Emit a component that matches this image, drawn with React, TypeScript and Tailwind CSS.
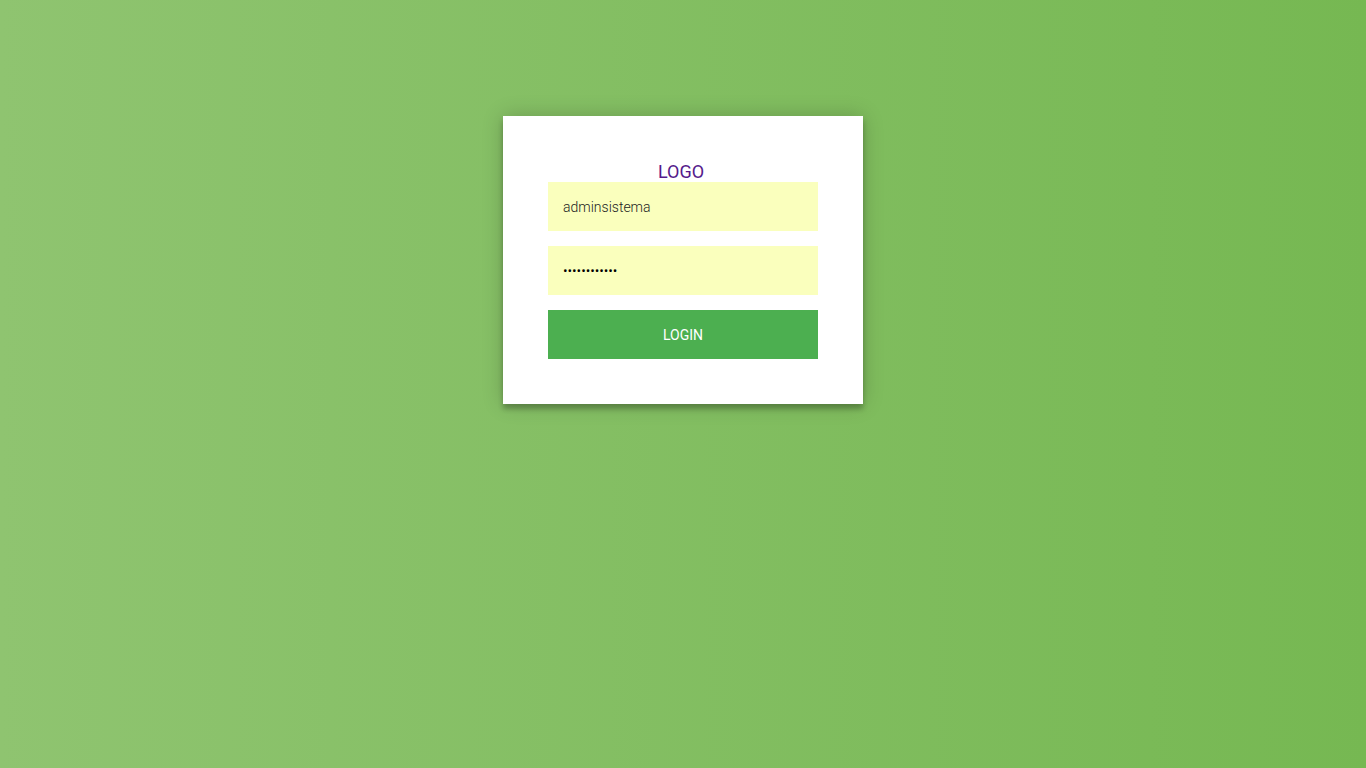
const App = () => {
    return (
        <div className="min-h-screen w-full bg-gradient-to-r from-[#8fc470] to-[#76b852] font-['Roboto',sans-serif]">
            <div className="w-[360px] mx-auto pt-[116px]">
                <div className="bg-white p-[45px] text-center shadow-[0_0_20px_0_rgba(0,0,0,0.2),0_5px_5px_0_rgba(0,0,0,0.24)]">
                    <form className="flex flex-col">
                        <a href="#" className="block pr-[4px] text-[18px] leading-[21px] text-[#551a8b] no-underline">LOGO</a>
                        <input
                            type="text"
                            defaultValue="adminsistema"
                            className="w-full bg-[#faffbd] outline-none border-0 px-[15px] pt-[16px] pb-[14px] mb-[15px] text-[14px] leading-[19px] text-[#222] font-light"
                        />
                        <input
                            type="password"
                            defaultValue="adminsistema"
                            className="w-full bg-[#faffbd] outline-none border-0 px-[15px] pt-[16px] pb-[14px] mb-[15px] text-[14px] leading-[19px] text-black font-light"
                        />
                        <button
                            type="button"
                            className="w-full bg-[#4caf50] text-white uppercase text-[14px] leading-[19px] px-[15px] pt-[16px] pb-[14px] border-0 outline-none"
                        >
                            login
                        </button>
                    </form>
                </div>
            </div>
        </div>
    );
};

export default App;
